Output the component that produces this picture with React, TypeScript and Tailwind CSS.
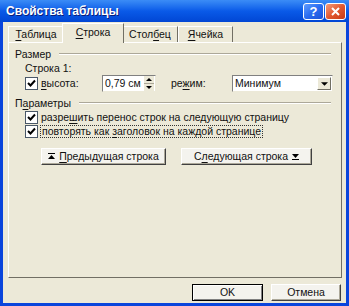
import React from "react"

function Acc({ text, at }: { text: string; at: number }) {
  return (
    <span>
      {text.slice(0, at)}
      <span className="underline underline-offset-[2px]">{text[at]}</span>
      {text.slice(at + 1)}
    </span>
  )
}

function Check() {
  return (
    <span className="w-[13px] h-[13px] shrink-0 border border-[#4a5868] bg-white flex items-center justify-center">
      <svg width="9" height="9" viewBox="0 0 9 9">
        <path d="M1 4 L3.5 6.5 L8 1.5" fill="none" stroke="#000" strokeWidth="2" />
      </svg>
    </span>
  )
}

function Group({ children }: { children: React.ReactNode }) {
  return (
    <div className="h-[14px] flex items-center pl-[6px] pr-[10px] gap-[8px]">
      <span>{children}</span>
      <div className="flex-1 h-[2px] border-t border-[#aca899] border-b border-b-white" />
    </div>
  )
}

function Arrow({ up }: { up?: boolean }) {
  return (
    <svg width="7" height="7" viewBox="0 0 7 7" className="shrink-0">
      {up ? (
        <>
          <rect x="0" y="0" width="7" height="1" fill="#000" />
          <path d="M3.5 2 L7 6 L0 6 Z" fill="#000" />
        </>
      ) : (
        <>
          <path d="M0 1 L7 1 L3.5 5 Z" fill="#000" />
          <rect x="0" y="6" width="7" height="1" fill="#000" />
        </>
      )}
    </svg>
  )
}

function Tri({ down, size = 7 }: { down?: boolean; size?: number }) {
  return (
    <svg width={size} height={Math.ceil(size / 2)} viewBox="0 0 8 4">
      {down ? <path d="M0 0 L8 0 L4 4 Z" fill="#000" /> : <path d="M0 4 L8 4 L4 0 Z" fill="#000" />}
    </svg>
  )
}

function Tab({ children, w, active }: { children: React.ReactNode; w: string; active?: boolean }) {
  return active ? (
    <div className={`${w} h-[20px] -mb-[1px] -mx-[2px] relative z-10 flex items-center justify-center pb-[2px] bg-[#ece9d8] border-t border-l border-white border-r border-r-[#716f64]`}>
      {children}
    </div>
  ) : (
    <div className={`${w} h-[16px] flex items-center justify-center bg-[#ece9d8] border-t border-l border-white border-r border-r-[#716f64]`}>
      {children}
    </div>
  )
}

export default function App() {
  return (
    <div className="w-[349px] h-[306px] bg-[#0a45dc] flex flex-col overflow-hidden font-['Liberation_Sans',Arial,sans-serif] text-[10.5px] text-[#111] leading-none">
      {/* title bar */}
      <div className="h-[22px] shrink-0 flex items-center pl-[6px] pr-[3px] bg-gradient-to-b from-[#3b8cf6] via-[#0a5ae8] to-[#0246d4]">
        <span className="flex-1 text-white font-bold text-[12px] [text-shadow:1px_1px_0_#0a1e7a]">Свойства таблицы</span>
        <div className="flex gap-[1px] items-center">
          <div className="w-[21px] h-[17px] rounded-[3px] border border-white bg-gradient-to-br from-[#5f9cff] via-[#2a6cf0] to-[#1d50d6] flex items-center justify-center text-white font-bold text-[13px]">?</div>
          <div className="w-[21px] h-[17px] rounded-[3px] border border-white bg-gradient-to-br from-[#f29a7a] via-[#e2582f] to-[#c63a16] flex items-center justify-center">
            <svg width="9" height="9" viewBox="0 0 9 9">
              <path d="M1 1 L8 8 M8 1 L1 8" stroke="#fff" strokeWidth="2" />
            </svg>
          </div>
        </div>
      </div>

      {/* body */}
      <div className="flex-1 mx-[3px] mb-[3px] bg-[#ece9d8] flex flex-col">
        {/* tabs */}
        <div className="h-[20px] flex items-end pl-[5px]">
          <Tab w="w-[56px]"><Acc text="Таблица" at={0} /></Tab>
          <Tab w="w-[62px]" active><Acc text="Строка" at={0} /></Tab>
          <Tab w="w-[56px]"><Acc text="Столбец" at={4} /></Tab>
          <Tab w="w-[55px]"><Acc text="Ячейка" at={0} /></Tab>
        </div>

        {/* panel */}
        <div className="ml-[5px] mr-[4px] h-[236px] border-t border-l border-white border-r border-b border-r-[#716f64] border-b-[#716f64] pt-[4px] flex flex-col">
          <Group>Размер</Group>
          <div className="h-[14px] flex items-center pl-[16px]">Строка 1:</div>
          <div className="h-[17px] flex items-center pl-[16px]">
            <Check />
            <span className="ml-[3px] w-[61px]"><Acc text="высота:" at={0} /></span>
            <div className="w-[54px] h-[17px] flex items-center bg-white border border-t-[#808080] border-l-[#808080] border-r-[#ece9d8] border-b-[#ece9d8]">
              <span className="flex-1 pl-[2px]">0,79 см</span>
              <div className="w-[10px] h-full flex flex-col mr-[1px]">
                <div className="flex-1 bg-[#ece9d8] flex items-center justify-center border-b border-[#aca899]"><Tri size={6} /></div>
                <div className="flex-1 bg-[#ece9d8] flex items-center justify-center"><Tri down size={6} /></div>
              </div>
            </div>
            <span className="ml-[15px] w-[61px]"><Acc text="режим:" at={2} /></span>
            <div className="w-[101px] h-[17px] flex items-center bg-white border border-t-[#808080] border-l-[#808080] border-r-[#ece9d8] border-b-[#ece9d8]">
              <span className="flex-1 pl-[2px]">Минимум</span>
              <div className="w-[14px] h-[13px] mr-[1px] bg-[#ece9d8] border border-t-white border-l-white border-r-[#716f64] border-b-[#716f64] flex items-center justify-center">
                <Tri down size={7} />
              </div>
            </div>
          </div>
          <div className="mt-[4px]">
            <Group><Acc text="Параметры" at={1} /></Group>
          </div>
          <div className="h-[14px] flex items-center pl-[16px] gap-[3px]">
            <Check />
            <Acc text="разрешить перенос строк на следующую страницу" at={5} />
          </div>
          <div className="h-[14px] flex items-center pl-[16px] gap-[2px]">
            <Check />
            <span className="border border-dotted border-[#333] px-[1px] h-[13px] flex items-center">
              <Acc text="повторять как заголовок на каждой странице" at={14} />
            </span>
          </div>
          <div className="mt-[10px] flex pl-[32px] gap-[15px]">
            <div className="w-[125px] h-[17px] flex items-center justify-center gap-[4px] bg-[#f4f3ee] border border-t-white border-l-white border-r-[#404040] border-b-[#404040] shadow-[inset_-1px_-1px_0_#aca899]">
              <Arrow up />
              <Acc text="Предыдущая строка" at={0} />
            </div>
            <div className="w-[131px] h-[17px] flex items-center justify-center gap-[4px] bg-[#f4f3ee] border border-t-white border-l-white border-r-[#404040] border-b-[#404040] shadow-[inset_-1px_-1px_0_#aca899]">
              <Acc text="Следующая строка" at={1} />
              <Arrow />
            </div>
          </div>
        </div>

        {/* dialog buttons */}
        <div className="mt-[6px] flex justify-end gap-[8px] pr-[5px]">
          <div className="w-[71px] h-[17px] flex items-center justify-center bg-[#f4f3ee] border border-black shadow-[inset_1px_1px_0_#fff,inset_-1px_-1px_0_#808080]">OK</div>
          <div className="w-[70px] h-[17px] flex items-center justify-center bg-[#f4f3ee] border border-t-white border-l-white border-r-[#404040] border-b-[#404040] shadow-[inset_-1px_-1px_0_#aca899]">Отмена</div>
        </div>
      </div>
    </div>
  )
}
